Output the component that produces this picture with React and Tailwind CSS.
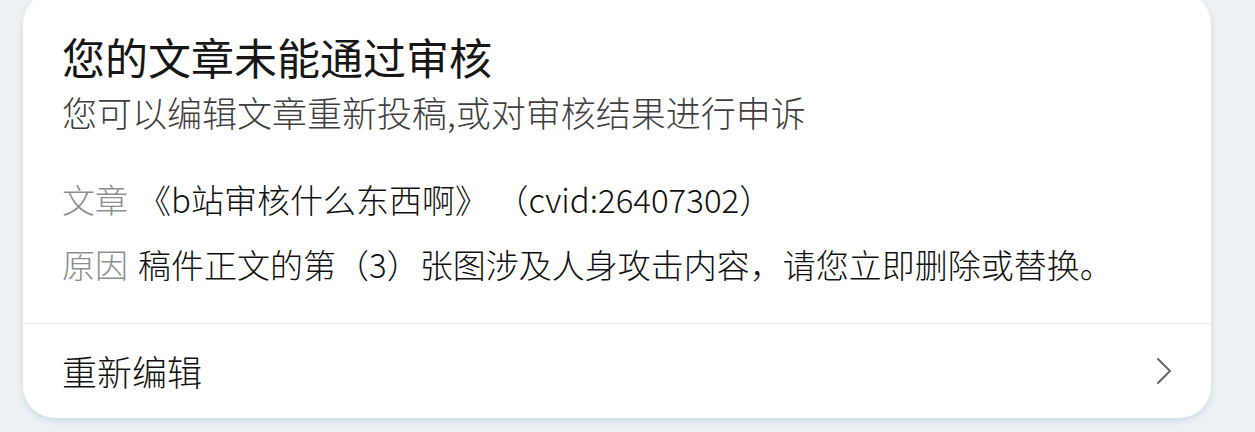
import React from 'react';

const font = { fontFamily: '"Noto Sans CJK SC", "Noto Sans", sans-serif' };

const InfoRow = ({ label, children }) => (
    <div className="flex items-center h-[44px] text-[33px] leading-[44px]">
        <span className="text-[#8f8f8f] whitespace-nowrap">{label}</span>
        <span className="ml-[10px] text-[#111111] whitespace-nowrap">{children}</span>
    </div>
);

const App = () => {
    return (
        <div className="w-[1255px] h-[432px] overflow-hidden bg-[#eef1f3] font-light" style={font}>
            <div className="ml-[23px] -mt-2 w-[1188px] h-[426px] bg-white rounded-[32px] shadow-[0_3px_6px_rgba(150,200,220,0.45)] flex flex-col">
                <div className="px-[39px] pt-[39px] pb-[37px]">
                    <h1 className="text-[43px] leading-[50px] text-[#161616] font-normal whitespace-nowrap">
                        您的文章未能通过审核
                    </h1>
                    <p className="mt-[11px] text-[35px] leading-[40px] text-[#3f3f3f] whitespace-nowrap">
                        您可以编辑文章重新投稿,或对审核结果进行申诉
                    </p>
                    <div className="mt-[45px] flex flex-col gap-[21px]">
                        <InfoRow label="文章">
                            《b站审核什么东西啊》<span className="ml-[24px]">（cvid:26407302）</span>
                        </InfoRow>
                        <InfoRow label="原因">稿件正文的第（3）张图涉及人身攻击内容，请您立即删除或替换。</InfoRow>
                    </div>
                </div>
                <div className="border-t border-[#e6e6e6] flex-1 flex items-center justify-between pl-[39px] pr-[39px]">
                    <span className="text-[35px] leading-[44px] text-[#111111]">重新编辑</span>
                    <svg width="16" height="28" viewBox="0 0 16 28" fill="none">
                        <polyline points="2,2 14,14 2,26" stroke="#666666" strokeWidth="2" strokeLinecap="round" strokeLinejoin="round" />
                    </svg>
                </div>
            </div>
        </div>
    );
};

export default App;
